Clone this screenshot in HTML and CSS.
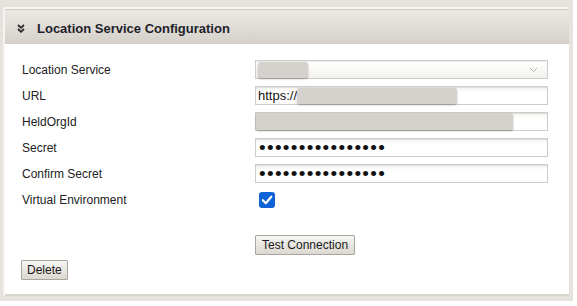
FILE: index.html
```html
<!DOCTYPE html>
<html>
<head>
<meta charset="utf-8">
<link rel="stylesheet" href="styles.css">
</head>
<body>
<div class="frame">
  <div class="panel">
    <div class="header">
      <svg class="chev" width="8" height="9" viewBox="0 0 8 9"><path d="M1 1l3 2.8 3-2.8M1 5l3 2.8 3-2.8" stroke="#2a2a2a" stroke-width="1.8" fill="none"/></svg>
      <span class="title">Location Service Configuration</span>
    </div>
    <div class="content">
      <div class="form">
        <label class="label">Location Service</label>
        <div class="field select"><span class="redact r-sel"></span><svg width="9" height="6" viewBox="0 0 9 6"><path d="M1 1l3.5 3.5L8 1" stroke="#b5b2ad" stroke-width="1" fill="none"/></svg></div>
        <label class="label">URL</label>
        <div class="field text">https://<span class="redact r-url"></span></div>
        <label class="label">HeldOrgId</label>
        <div class="field text"><span class="redact r-held"></span></div>
        <label class="label">Secret</label>
        <input class="field pw" type="password" value="aaaaaaaaaaaaaaaa">
        <label class="label">Confirm Secret</label>
        <input class="field pw" type="password" value="aaaaaaaaaaaaaaaa">
        <label class="label">Virtual Environment</label>
        <div class="cbwrap"><span class="checkbox"><svg width="12" height="10" viewBox="0 0 12 10"><path d="M1.8 5.2l3 3 5.5-6.5" stroke="#fff" stroke-width="2.2" fill="none" stroke-linecap="round" stroke-linejoin="round"/></svg></span></div>
      </div>
      <div class="testrow"><button class="btn wide">Test Connection</button></div>
      <div class="delrow"><button class="btn">Delete</button></div>
    </div>
  </div>
</div>
</body>
</html>
```
FILE: styles.css
```css
html, body { margin: 0; padding: 0; background: #fff; }
body { font-family: "Liberation Sans", Arial, sans-serif; color: #222; }
.frame {
  width: 573px; height: 301px; box-sizing: border-box;
  background: #e6e3de;
  padding: 7px 4px 5px 3px;
}
.panel {
  height: 100%; box-sizing: border-box;
  border-top: 2px solid #f5f4f1;
  border-left: 2px solid #f5f4f1;
  display: flex; flex-direction: column;
  box-shadow: inset 1px 1px 0 #cbc7c1;
  background: #fff;
}
.header {
  height: 35px; box-sizing: border-box;
  background: linear-gradient(#ece9e5, #d4d0c9);
  border-top: 1px solid #cbc7c1;
  display: flex; align-items: center;
  padding: 2px 0 0 12px;
}
.chev { margin-right: 12px; margin-top: 1px; }
.title { font-size: 13px; font-weight: bold; color: #1f1f2a; }
.content {
  flex: 1; background: #fff;
  border-bottom: 2px solid #d9d6d0;
  padding: 16px 0 0 17px;
}
.form {
  display: grid;
  grid-template-columns: 233px 293px;
  grid-auto-rows: 19px;
  row-gap: 7px;
  align-items: center;
}
.label { font-size: 12px; color: #222; }
.field {
  height: 19px; box-sizing: border-box; margin: 0;
  border: 1px solid #cfccc7;
  background: linear-gradient(#f2f1ee, #fff 5px);
  box-shadow: inset 0 1px 1px rgba(0,0,0,0.08);
  font-family: "Liberation Sans", Arial, sans-serif;
  font-size: 13px; color: #111;
}
.select {
  display: flex; align-items: center; justify-content: space-between;
  padding: 0 9px 0 2px;
  background: linear-gradient(#fff, #f3f2ef);
}
.text { display: flex; align-items: center; padding: 0 0 0 2px; }
.redact {
  display: inline-block; height: 17px;
  background: #d5d1cc; border-radius: 3px;
  box-shadow: 0 1px 2px rgba(0,0,0,0.3);
}
.r-sel { width: 50px; height: 16px; }
.r-url { width: 160px; height: 16px; }
.r-held { width: 257px; margin-left: -2px; }
.pw {
  width: 293px; padding: 0 0 0 3px;
  font-size: 19px; letter-spacing: 1.3px; line-height: 17px;
  outline: none;
}
.cbwrap { display: flex; align-items: center; height: 19px; padding-left: 4px; }
.checkbox {
  width: 16px; height: 16px; border-radius: 3px; background: #0f63d6;
  display: flex; align-items: center; justify-content: center;
}
.testrow { padding-left: 233px; margin-top: 26px; }
.delrow { margin-top: 5px; padding-left: 0; margin-left: -1px; }
.btn {
  height: 20px; box-sizing: border-box; padding: 0 5px;
  font-family: "Liberation Sans", Arial, sans-serif; font-size: 12px; color: #1a1a1a;
  background: linear-gradient(#f6f5f2, #dcd8d1);
  border: 1px solid #a9a6a0; border-radius: 1px;
}
.wide { padding: 0 6px; }
```
